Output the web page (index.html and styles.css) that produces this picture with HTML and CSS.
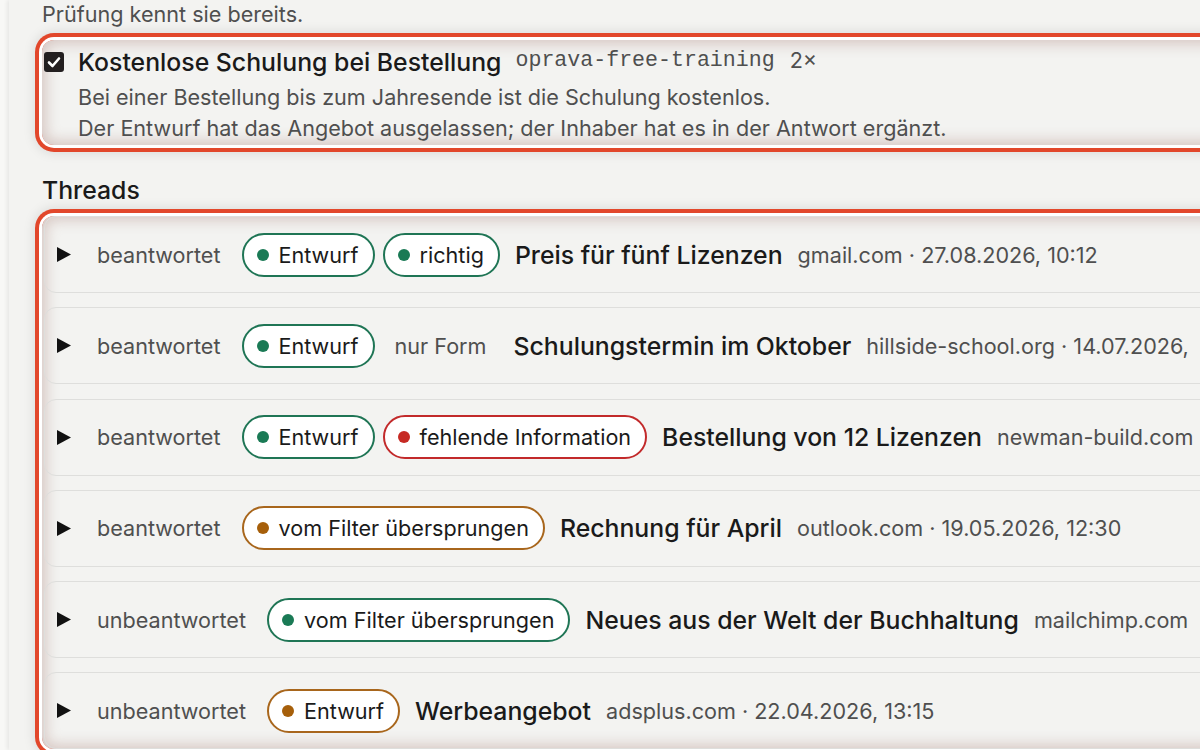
FILE: index.html
```html
<!DOCTYPE html>
<html lang="de">
<head>
<meta charset="utf-8">
<title>Prüfung</title>
<link rel="stylesheet" href="styles.css">
</head>
<body>
<main class="panel">
  <p class="intro">Prüfung kennt sie bereits.</p>

  <div class="hl fact">
    <div class="fact-head">
      <span class="check"><svg viewBox="0 0 20 20" width="20" height="20"><path d="M5 10.5 L8.5 14 L15 6.5" fill="none" stroke="#fff" stroke-width="2.6" stroke-linecap="round" stroke-linejoin="round"/></svg></span>
      <span class="fact-title">Kostenlose Schulung bei Bestellung</span>
      <code class="slug">oprava-free-training</code>
      <span class="count">2×</span>
    </div>
    <p class="fact-desc">Bei einer Bestellung bis zum Jahresende ist die Schulung kostenlos.<br>Der Entwurf hat das Angebot ausgelassen; der Inhaber hat es in der Antwort ergänzt.</p>
  </div>

  <h2 class="section-title">Threads</h2>

  <div class="hl threads">
    <div class="row">
      <span class="caret"><svg viewBox="0 0 14 15" width="14" height="15"><polygon points="0,0 14,7.5 0,15" fill="#111"/></svg></span>
      <span class="status">beantwortet</span>
      <span class="pill green"><i class="dot"></i>Entwurf</span>
      <span class="pill green"><i class="dot"></i>richtig</span>
      <span class="title">Preis für fünf Lizenzen</span>
      <span class="meta">gmail.com · 27.08.2026, 10:12</span>
    </div>
    <div class="row">
      <span class="caret"><svg viewBox="0 0 14 15" width="14" height="15"><polygon points="0,0 14,7.5 0,15" fill="#111"/></svg></span>
      <span class="status">beantwortet</span>
      <span class="pill green"><i class="dot"></i>Entwurf</span>
      <span class="note">nur Form</span>
      <span class="title">Schulungstermin im Oktober</span>
      <span class="meta">hillside-school.org · 14.07.2026,</span>
    </div>
    <div class="row">
      <span class="caret"><svg viewBox="0 0 14 15" width="14" height="15"><polygon points="0,0 14,7.5 0,15" fill="#111"/></svg></span>
      <span class="status">beantwortet</span>
      <span class="pill green"><i class="dot"></i>Entwurf</span>
      <span class="pill red"><i class="dot"></i>fehlende Information</span>
      <span class="title">Bestellung von 12 Lizenzen</span>
      <span class="meta">newman-build.com</span>
    </div>
    <div class="row">
      <span class="caret"><svg viewBox="0 0 14 15" width="14" height="15"><polygon points="0,0 14,7.5 0,15" fill="#111"/></svg></span>
      <span class="status">beantwortet</span>
      <span class="pill amber"><i class="dot"></i>vom Filter übersprungen</span>
      <span class="title">Rechnung für April</span>
      <span class="meta">outlook.com · 19.05.2026, 12:30</span>
    </div>
    <div class="row">
      <span class="caret"><svg viewBox="0 0 14 15" width="14" height="15"><polygon points="0,0 14,7.5 0,15" fill="#111"/></svg></span>
      <span class="status">unbeantwortet</span>
      <span class="pill green"><i class="dot"></i>vom Filter übersprungen</span>
      <span class="title">Neues aus der Welt der Buchhaltung</span>
      <span class="meta">mailchimp.com</span>
    </div>
    <div class="row">
      <span class="caret"><svg viewBox="0 0 14 15" width="14" height="15"><polygon points="0,0 14,7.5 0,15" fill="#111"/></svg></span>
      <span class="status">unbeantwortet</span>
      <span class="pill amber"><i class="dot"></i>Entwurf</span>
      <span class="title">Werbeangebot</span>
      <span class="meta">adsplus.com · 22.04.2026, 13:15</span>
    </div>
  </div>
</main>
</body>
</html>
```

FILE: styles.css
```css
html, body {
  margin: 0;
  padding: 0;
  height: 100%;
  overflow: hidden;
}

body {
  background: #f8f8f6;
  font-family: Inter, "Noto Sans", "Liberation Sans", sans-serif;
  color: #1a1a1a;
}

.panel {
  margin-left: 9px;
  width: 1400px;
  min-height: 100%;
  background: #f3f3f1;
  box-shadow: -2px 0 4px rgba(0, 0, 0, 0.07);
  padding: 0 0 0 33px;
  box-sizing: border-box;
}

.intro {
  margin: 0;
  font-size: 21.6px;
  line-height: 28px;
  color: #4f4f4f;
}

.hl {
  border-radius: 12px;
  box-shadow:
    0 0 0 3px #ffffff,
    0 0 0 7px #e2472b,
    0 0 12px 8px rgba(0, 0, 0, 0.10),
    inset 0 0 14px 4px rgba(150, 95, 85, 0.30);
}

.fact {
  margin-top: 12px;
  padding: 2px 0 1px 2px;
}

.fact-head {
  display: flex;
  align-items: center;
  height: 40px;
  white-space: nowrap;
}

.check {
  width: 20px;
  height: 20px;
  border-radius: 3px;
  background: #231f20;
  display: flex;
  margin-right: 14px;
}

.fact-title {
  font-size: 24.8px;
  font-weight: 500;
  color: #1a1a1a;
}

.slug {
  font-family: "Liberation Mono", "DejaVu Sans Mono", monospace;
  font-size: 21.6px;
  color: #4f4f4f;
  margin-left: 14px;
  position: relative;
  top: -2px;
}

.count {
  font-size: 21.6px;
  color: #4f4f4f;
  margin-left: 15px;
  position: relative;
  top: -2px;
}

.fact-desc {
  margin: 0 0 0 34px;
  font-size: 21.6px;
  line-height: 31px;
  color: #4f4f4f;
  white-space: nowrap;
}

.section-title {
  margin: 28px 0 9px 0;
  font-size: 24.8px;
  line-height: 34px;
  font-weight: 500;
  color: #1a1a1a;
}

.threads {
  padding: 0 0 0 2px;
  display: flex;
  flex-direction: column;
  gap: 14.3px;
}

.row {
  height: 77px;
  box-sizing: border-box;
  border: 1px solid #dededc;
  border-radius: 12px;
  padding-left: 12px;
  display: flex;
  align-items: center;
  gap: 8px;
  white-space: nowrap;
}

.caret {
  display: flex;
  width: 14px;
  margin-right: 18px;
}

.status {
  font-size: 21.6px;
  color: #4f4f4f;
  margin-right: 13px;
}

.pill {
  display: inline-flex;
  align-items: center;
  height: 44px;
  box-sizing: border-box;
  border: 2px solid;
  border-radius: 22px;
  background: #fff;
  padding: 0 14px 0 13px;
  font-size: 21.6px;
  color: #1a1a1a;
}

.dot {
  width: 12px;
  height: 12px;
  border-radius: 50%;
  margin-right: 10px;
}

.pill.green { border-color: #1f7555; }
.pill.green .dot { background: #1a7a55; }
.pill.red { border-color: #c22a2b; }
.pill.red .dot { background: #c62a24; }
.pill.amber { border-color: #a8661c; }
.pill.amber .dot { background: #a65f0a; }

.note {
  font-size: 21.6px;
  color: #4f4f4f;
  margin: 0 12px;
}

.title {
  font-size: 24.8px;
  font-weight: 500;
  color: #1a1a1a;
  margin-left: 7px;
}

.meta {
  font-size: 21.6px;
  color: #4f4f4f;
  margin-left: 7px;
}
```
